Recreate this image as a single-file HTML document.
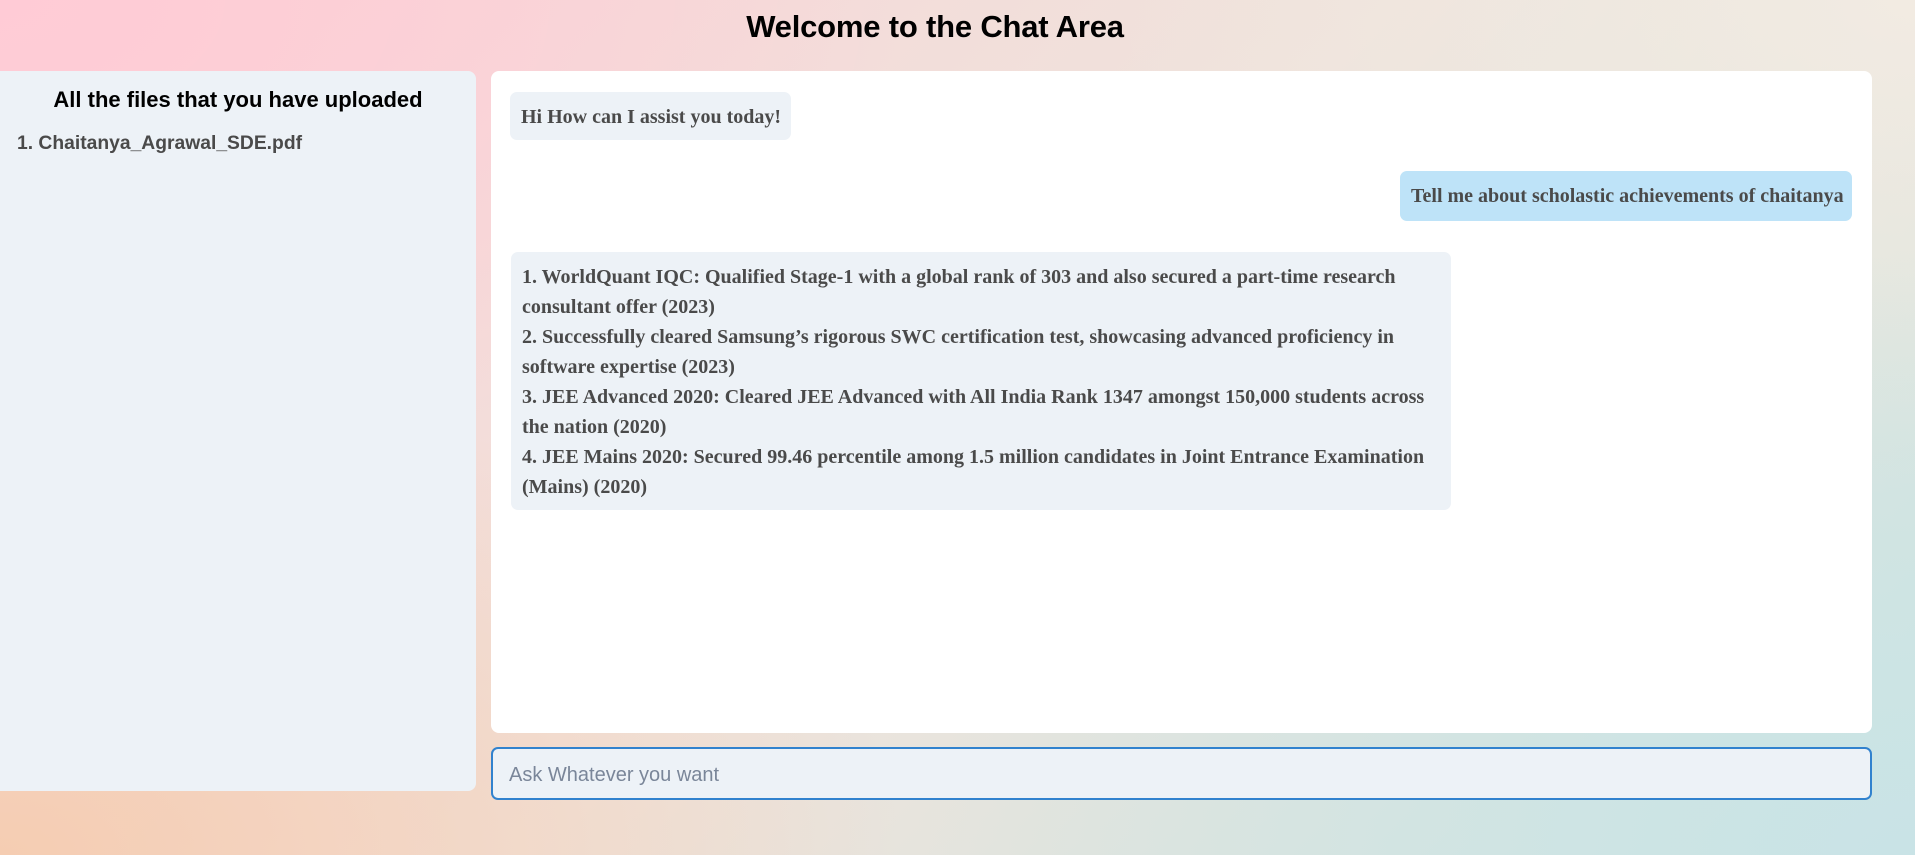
<!DOCTYPE html>
<html><head><meta charset="utf-8"><style>
html,body{margin:0;padding:0;width:1915px;height:855px;overflow:hidden}
body{position:relative;font-family:"Liberation Sans",sans-serif;
background:
radial-gradient(ellipse 900px 500px at 0% 0%, #ffcbd6 0%, rgba(255,203,214,0) 100%),
radial-gradient(ellipse 900px 500px at 0% 100%, #f5cdb2 0%, rgba(245,205,178,0) 100%),
radial-gradient(ellipse 1000px 600px at 100% 100%, #c9e3e6 0%, rgba(201,227,230,0) 100%),
radial-gradient(ellipse 800px 500px at 100% 0%, #f2ebe2 0%, rgba(242,235,226,0) 100%),
linear-gradient(135deg,#fbd2d6 0%,#efe3dc 50%,#cfe6e0 100%);}
h1{position:absolute;left:0;width:1870px;top:9px;margin:0;text-align:center;font-size:31px;font-weight:bold;color:#000;letter-spacing:-0.2px}
.side{position:absolute;left:0;top:71px;width:476px;height:720px;background:#edf2f7;border-radius:0 8px 8px 0}
.f{position:absolute;left:17px;top:133px;font-size:19.3px;font-weight:bold;color:#4a4a4a}
.chat{position:absolute;left:491px;top:71px;width:1381px;height:662px;background:#fff;border-radius:8px}
.b{position:absolute;background:#edf2f7;border-radius:7px;font-family:"Liberation Serif",serif;font-weight:bold;font-size:20px;color:#4a4a4a;line-height:30px;padding:6px 11px;white-space:nowrap;box-sizing:border-box}
.inp{position:absolute;left:491px;top:747px;width:1381px;height:53px;box-sizing:border-box;border:2px solid #3182ce;border-radius:7px;background:#edf2f7;font-size:20px;color:#7a8699;padding:15px 16px 0}
</style></head><body>
<h1>Welcome to the Chat Area</h1>
<div class="side"></div>
<div style="position:absolute;left:0;top:87px;width:476px;text-align:center;font-size:22px;font-weight:bold;color:#000">All the files that you have uploaded</div>
<div class="f">1. Chaitanya_Agrawal_SDE.pdf</div>
<div class="chat"></div>
<div class="b" style="left:510px;top:92px;width:281px;height:48px;line-height:39px">Hi How can I assist you today!</div>
<div class="b" style="left:1400px;top:171px;width:452px;height:50px;background:#bee3f8;line-height:39px">Tell me about scholastic achievements of chaitanya</div>
<div class="b" style="left:511px;top:252px;width:940px;height:258px;padding-top:10px">1. WorldQuant IQC: Qualified Stage-1 with a global rank of 303 and also secured a part-time research<br>consultant offer (2023)<br>2. Successfully cleared Samsung’s rigorous SWC certification test, showcasing advanced proficiency in<br>software expertise (2023)<br>3. JEE Advanced 2020: Cleared JEE Advanced with All India Rank 1347 amongst 150,000 students across<br>the nation (2020)<br>4. JEE Mains 2020: Secured 99.46 percentile among 1.5 million candidates in Joint Entrance Examination<br>(Mains) (2020)</div>
<div class="inp">Ask Whatever you want</div>
</body></html>
